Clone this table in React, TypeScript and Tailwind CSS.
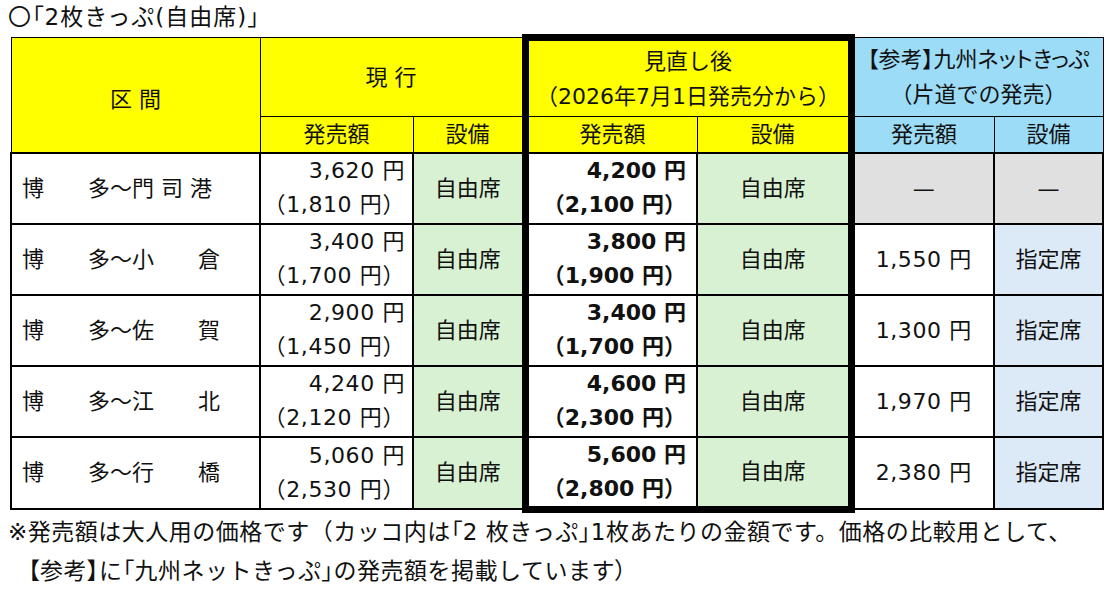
const rows = [
  { from: '博　　多', to: '門 司 港', cur: '3,620', curHalf: '1,810', next: '4,200', nextHalf: '2,100', net: '' },
  { from: '博　　多', to: '小　　倉', cur: '3,400', curHalf: '1,700', next: '3,800', nextHalf: '1,900', net: '1,550' },
  { from: '博　　多', to: '佐　　賀', cur: '2,900', curHalf: '1,450', next: '3,400', nextHalf: '1,700', net: '1,300' },
  { from: '博　　多', to: '江　　北', cur: '4,240', curHalf: '2,120', next: '4,600', nextHalf: '2,300', net: '1,970' },
  { from: '博　　多', to: '行　　橋', cur: '5,060', curHalf: '2,530', next: '5,600', nextHalf: '2,800', net: '2,380' },
];

// narrow (proportional) punctuation
function P({ children }: { children: string }) {
  return <span className="[font-feature-settings:'palt']">{children}</span>;
}

export default function App() {
  return (
    <div className="w-[1111px] h-[593px] bg-white text-[#111] text-[22px] font-['DejaVu_Sans','Noto_Sans_CJK_JP',sans-serif] overflow-hidden">
      <div className="pl-[8px] text-[23px] leading-[34px] tracking-[1px]">
        〇<P>「</P>2枚きっぷ(自由席)」
      </div>

      <table className="ml-[10px] w-[1092px] table-fixed border-collapse">
        <colgroup>
          <col className="w-[249px]" />
          <col className="w-[153px]" />
          <col className="w-[112px]" />
          <col className="w-[172px]" />
          <col className="w-[154px]" />
          <col className="w-[143px]" />
          <col className="w-[109px]" />
        </colgroup>
        <thead>
          <tr className="h-[79px]">
            <th rowSpan={2} className="border border-black bg-[#ffff00] font-normal pt-[10px]">区 間</th>
            <th colSpan={2} className="border border-black bg-[#ffff00] font-normal">現 行</th>
            <th colSpan={2} className="border border-black border-t-[7px] border-l-[7px] border-r-[7px] bg-[#ffff00] font-normal leading-[35px]">
              <div>見直し後</div>
              <div>（2026年7月1日発売分から）</div>
            </th>
            <th colSpan={2} className="border border-black bg-[#9cdcf6] font-normal leading-[35px] whitespace-nowrap">
              <div className="[font-feature-settings:'palt']">【参考】九州ネットきっぷ</div>
              <div>（片道での発売）</div>
            </th>
          </tr>
          <tr className="h-[36px]">
            <th className="border border-black bg-[#ffff00] font-normal">発売額</th>
            <th className="border border-black bg-[#ffff00] font-normal">設備</th>
            <th className="border border-black border-l-[7px] bg-[#ffff00] font-normal">発売額</th>
            <th className="border border-black border-r-[7px] bg-[#ffff00] font-normal">設備</th>
            <th className="border border-black bg-[#9cdcf6] font-normal">発売額</th>
            <th className="border border-black bg-[#9cdcf6] font-normal">設備</th>
          </tr>
        </thead>
        <tbody>
          {rows.map((r, i) => {
            const last = i === rows.length - 1;
            return (
              <tr key={r.to} className="h-[71px]">
                <td className="border-2 border-black pl-[10px] whitespace-pre">
                  {r.from}〜{r.to}
                </td>
                <td className="border-2 border-black pr-[7px] text-right leading-[34px] whitespace-pre tracking-[0.6px]">
                  <div>{r.cur} 円</div>
                  <div>（{r.curHalf} 円）</div>
                </td>
                <td className="border-2 border-black bg-[#d9f1d3] text-center">自由席</td>
                <td className={`border-2 border-black border-l-[7px] pr-[10px] text-right font-bold leading-[34px] whitespace-pre ${last ? 'border-b-[7px]' : ''}`}>
                  <div>{r.next} 円</div>
                  <div>（{r.nextHalf} 円）</div>
                </td>
                <td className={`border-2 border-black border-r-[7px] bg-[#d9f1d3] text-center ${last ? 'border-b-[7px]' : ''}`}>自由席</td>
                {r.net ? (
                  <>
                    <td className="border-2 border-black text-center whitespace-pre tracking-[0.6px]">{r.net} 円</td>
                    <td className="border-2 border-black bg-[#dce9f7] text-center">指定席</td>
                  </>
                ) : (
                  <>
                    <td className="border-2 border-black bg-[#e0e0e0] text-center">—</td>
                    <td className="border-2 border-black bg-[#e0e0e0] text-center">—</td>
                  </>
                )}
              </tr>
            );
          })}
        </tbody>
      </table>

      <div className="px-[8px] text-[23px] leading-[39px] tracking-[0.5px] whitespace-nowrap">
        <div>
          ※発売額は大人用の価格です（カッコ内は<P>「</P>2 枚きっぷ<P>」</P>1枚あたりの金額です。価格の比較用として、
        </div>
        <div className="pl-[20px]">
          <P>【</P>参考<P>】</P>に<P>「</P>九州ネットきっぷ<P>」</P>の発売額を掲載しています<P>）</P>
        </div>
      </div>
    </div>
  );
}
